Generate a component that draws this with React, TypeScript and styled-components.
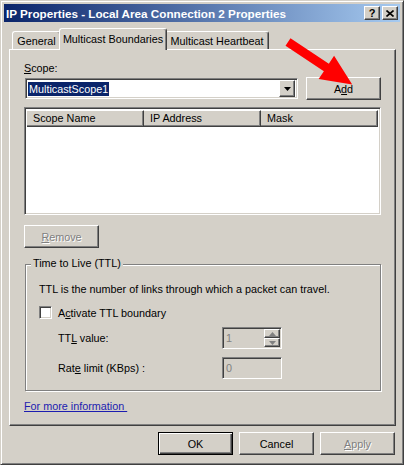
import styled, { createGlobalStyle } from "styled-components";

const GlobalStyle = createGlobalStyle`
  html, body {
    margin: 0;
    padding: 0;
    background: #d4d0c8;
  }
  body {
    font-family: "Liberation Sans", Arial, sans-serif;
    font-size: 10.8px;
    color: #000;
  }
  * {
    box-sizing: border-box;
  }
`;

const Window = styled.div`
  position: relative;
  width: 404px;
  height: 465px;
  display: flex;
  flex-direction: column;
  padding: 3px;
  background: #d4d0c8;
  border: 1px solid;
  border-color: #d4d0c8 #404040 #404040 #d4d0c8;
  box-shadow: inset 1px 1px #fff, inset -1px -1px #808080;
`;

const TitleBar = styled.div`
  display: flex;
  align-items: center;
  height: 18px;
  padding: 0 2px 0 2px;
  gap: 2px;
  background: linear-gradient(to right, #0a246a, #a6caf0);

  h1 {
    flex: 1;
    margin: 0;
    font-size: 11.7px;
    font-weight: 700;
    color: #fff;
    white-space: nowrap;
  }
`;

const TitleButton = styled.div`
  display: flex;
  align-items: center;
  justify-content: center;
  width: 16px;
  height: 14px;
  background: #d4d0c8;
  border: 1px solid;
  border-color: #fff #404040 #404040 #fff;
  box-shadow: inset -1px -1px #808080;
  font-weight: 700;
  font-size: 11px;
`;

const Body = styled.div`
  flex: 1;
  display: flex;
  flex-direction: column;
  padding: 6px 4px 6px 5px;
`;

const TabStrip = styled.div`
  display: flex;
  align-items: flex-end;
  height: 21px;
  padding-left: 3px;
`;

const Tab = styled.div<{ $active?: boolean; $w: number }>`
  position: relative;
  z-index: ${(p) => (p.$active ? 1 : 0)};
  display: flex;
  align-items: center;
  justify-content: center;
  width: ${(p) => p.$w}px;
  height: ${(p) => (p.$active ? 22 : 18)}px;
  margin: ${(p) => (p.$active ? "0 -2px -1px" : "0")};
  padding-bottom: ${(p) => (p.$active ? 2 : 0)}px;
  background: #d4d0c8;
  border: 1px solid;
  border-bottom: none;
  border-color: #fff #404040 #404040 #fff;
  border-radius: 3px 3px 0 0;
  box-shadow: inset -1px 0 #808080;
  white-space: nowrap;
`;

const Panel = styled.div`
  display: flex;
  flex-direction: column;
  height: 377px;
  padding: 12px 14px 0 14px;
  border: 1px solid;
  border-color: #fff #404040 #404040 #fff;
  box-shadow: inset -1px -1px #808080;
`;

const Label = styled.div`
  line-height: 13px;
  height: 13px;
  white-space: nowrap;
`;

const ComboRow = styled.div`
  display: flex;
  align-items: center;
  justify-content: space-between;
  height: 23px;
  margin-top: 2px;
`;

const Sunken = styled.div<{ $disabled?: boolean }>`
  background: ${(p) => (p.$disabled ? "#d4d0c8" : "#fff")};
  border: 1px solid;
  border-color: #808080 #fff #fff #808080;
  box-shadow: inset 1px 1px #404040, inset -1px -1px #d4d0c8;
`;

const Combo = styled(Sunken)`
  display: flex;
  align-items: center;
  width: 273px;
  height: 21px;
  margin-left: 1px;
  padding: 2px;
`;

const Selected = styled.span`
  flex: 1;
  span {
    display: inline-block;
    padding: 0 1px;
    line-height: 14px;
    background: #0a246a;
    color: #fff;
  }
`;

const Raised = styled.div`
  display: flex;
  align-items: center;
  justify-content: center;
  background: #d4d0c8;
  border: 1px solid;
  border-color: #fff #404040 #404040 #fff;
  box-shadow: inset -1px -1px #808080;
`;

const DropButton = styled(Raised)`
  width: 16px;
  height: 17px;
`;

const Button = styled.div<{ $default?: boolean; $disabled?: boolean }>`
  display: flex;
  align-items: center;
  justify-content: center;
  width: 75px;
  height: 23px;
  background: #d4d0c8;
  border: 1px solid;
  border-color: ${(p) => (p.$default ? "#000" : "#fff #404040 #404040 #fff")};
  box-shadow: ${(p) =>
    p.$default
      ? "inset 1px 1px #fff, inset -1px -1px #404040, inset -2px -2px #808080"
      : "inset -1px -1px #808080"};
  color: ${(p) => (p.$disabled ? "#808080" : "#000")};
  text-shadow: ${(p) => (p.$disabled ? "1px 1px #fff" : "none")};
`;

const ListView = styled(Sunken)`
  height: 108px;
  margin-top: 7px;
  padding: 2px;
`;

const HeaderRow = styled.div`
  display: flex;
`;

const HeaderCell = styled.div`
  width: 117px;
  height: 17px;
  padding-left: 6px;
  line-height: 15px;
  background: #d4d0c8;
  border: 1px solid;
  border-color: #fff #404040 #404040 #fff;
  border-width: 1px 1px 1px 0;
  box-shadow: inset -1px -1px #808080;

  &:first-child {
    border-left: none;
  }
`;

const RemoveRow = styled.div`
  margin-top: 10px;
`;

const Group = styled.div`
  display: flex;
  flex-direction: column;
  margin: 16px 0 0 1px;
  padding: 0 13px 11px 13px;
  border: 1px solid #808080;
  box-shadow: inset 1px 1px #fff, 1px 1px #fff;
`;

const Legend = styled.div`
  align-self: flex-start;
  margin: -8px 0 0 -8px;
  padding: 0 2px;
  line-height: 13px;
  background: #d4d0c8;
`;

const Desc = styled(Label)`
  margin-top: 13px;
`;

const CheckRow = styled.div`
  display: flex;
  align-items: center;
  gap: 6px;
  height: 13px;
  margin-top: 10px;
`;

const Checkbox = styled(Sunken)`
  width: 13px;
  height: 13px;
`;

const FieldRow = styled.div`
  display: grid;
  grid-template-columns: 164px 60px;
  align-items: center;
  height: 22px;
  margin-top: 8px;
  padding-left: 19px;
`;

const Field = styled(Sunken)`
  display: flex;
  align-items: center;
  height: 22px;
  padding: 2px 1px 2px 3px;
  color: #808080;
`;

const FieldText = styled.span`
  flex: 1;
`;

const Spin = styled.div`
  display: flex;
  flex-direction: column;
  width: 16px;
  height: 18px;
`;

const SpinHalf = styled(Raised)`
  height: 9px;
`;

const Link = styled.a`
  margin-top: 9px;
  align-self: flex-start;
  line-height: 13px;
  color: #1c1cb0;
  text-decoration: underline;
  white-space: pre;
`;

const ButtonRow = styled.div`
  display: flex;
  justify-content: flex-end;
  gap: 6px;
  margin-top: 6px;
  padding-right: 1px;
`;

const ArrowLayer = styled.svg`
  position: absolute;
  left: 0;
  top: 0;
  pointer-events: none;
`;

const Mn = styled.u`
  text-decoration: underline;
`;

const Tri = ({ up, color = "#000" }: { up?: boolean; color?: string }) => (
  <svg width="7" height="4" viewBox="0 0 7 4">
    <polygon points={up ? "3.5,0 7,4 0,4" : "0,0 7,0 3.5,4"} fill={color} />
  </svg>
);

export default function App() {
  return (
    <>
      <GlobalStyle />
      <Window>
        <TitleBar>
          <h1>IP Properties - Local Area Connection 2 Properties</h1>
          <TitleButton>?</TitleButton>
          <TitleButton>
            <svg width="8" height="7" viewBox="0 0 8 7">
              <path d="M0.5 0.5 L7.5 6.5 M7.5 0.5 L0.5 6.5" stroke="#000" strokeWidth="1.6" />
            </svg>
          </TitleButton>
        </TitleBar>
        <Body>
          <TabStrip>
            <Tab $w={49}>General</Tab>
            <Tab $w={108} $active>
              Multicast Boundaries
            </Tab>
            <Tab $w={104}>Multicast Heartbeat</Tab>
          </TabStrip>
          <Panel>
            <Label>
              <Mn>S</Mn>cope:
            </Label>
            <ComboRow>
              <Combo>
                <Selected>
                  <span>MulticastScope1</span>
                </Selected>
                <DropButton>
                  <Tri />
                </DropButton>
              </Combo>
              <Button>
                A<Mn>d</Mn>d
              </Button>
            </ComboRow>
            <ListView>
              <HeaderRow>
                <HeaderCell>Scope Name</HeaderCell>
                <HeaderCell>IP Address</HeaderCell>
                <HeaderCell>Mask</HeaderCell>
              </HeaderRow>
            </ListView>
            <RemoveRow>
              <Button $disabled>
                <Mn>R</Mn>emove
              </Button>
            </RemoveRow>
            <Group>
              <Legend>Time to Live (TTL)</Legend>
              <Desc>TTL is the number of links through which a packet can travel.</Desc>
              <CheckRow>
                <Checkbox />
                <span>
                  A<Mn>c</Mn>tivate TTL boundary
                </span>
              </CheckRow>
              <FieldRow>
                <span>
                  TT<Mn>L</Mn> value:
                </span>
                <Field $disabled>
                  <FieldText>1</FieldText>
                  <Spin>
                    <SpinHalf>
                      <Tri up color="#808080" />
                    </SpinHalf>
                    <SpinHalf>
                      <Tri color="#808080" />
                    </SpinHalf>
                  </Spin>
                </Field>
              </FieldRow>
              <FieldRow>
                <span>
                  Rat<Mn>e</Mn> limit (KBps) :
                </span>
                <Field $disabled>
                  <FieldText>0</FieldText>
                </Field>
              </FieldRow>
            </Group>
            <Link>For more information </Link>
          </Panel>
          <ButtonRow>
            <Button $default>OK</Button>
            <Button>Cancel</Button>
            <Button $disabled>
              <Mn>A</Mn>pply
            </Button>
          </ButtonRow>
        </Body>
        <ArrowLayer width="404" height="465" viewBox="0 0 404 465">
          <g transform="translate(287 41) rotate(33.5)">
            <polygon
              points="0,-4.5 46,-4.5 46,-14 77,0 46,14 46,4.5 0,4.5"
              fill="#ff0000"
            />
          </g>
        </ArrowLayer>
      </Window>
    </>
  );
}
